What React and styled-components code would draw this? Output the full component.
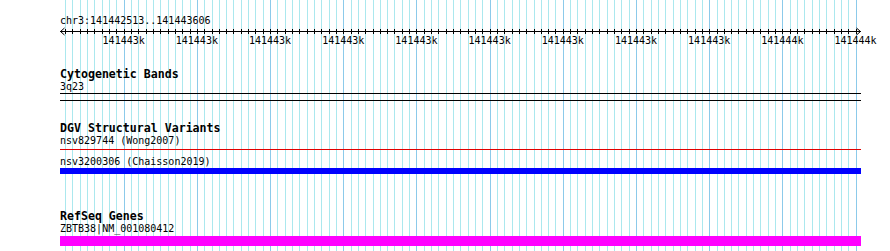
import React from 'react';
import styled, { createGlobalStyle } from 'styled-components';

// genome view: chr3:141442513..141443606 drawn over 801px
const START = 141442513;
const END = 141443606;
const PX_PER_BP = 0.7319;
const TRACK_WIDTH = 801;

const MINOR = 10 * PX_PER_BP;
const MAJOR = 100 * PX_PER_BP;
const toPx = (bp) => (bp - START) * PX_PER_BP;
const firstMinor = toPx(Math.ceil(START / 10) * 10);
const firstMajorBp = Math.ceil(START / 100) * 100;
const firstMajor = toPx(firstMajorBp);

const majors = [];
for (let bp = firstMajorBp; bp <= END; bp += 100) majors.push(bp);

const minors = [];
for (let x = firstMinor; x < TRACK_WIDTH; x += MINOR) minors.push(Math.ceil(x - 0.5) + 0.5);

const GlobalStyle = createGlobalStyle`
  html, body {
    margin: 0;
    background: #ffffff;
  }
  body {
    font-family: 'DejaVu Sans Mono', 'Liberation Mono', monospace;
    color: #000;
  }
`;

const Page = styled.div`
  padding-left: 60px;
  min-height: 100vh;
`;

const View = styled.div`
  width: ${TRACK_WIDTH}px;
  min-height: 100vh;
  padding-top: 15px;
  box-sizing: border-box;
  background-image:
    repeating-linear-gradient(
      to right,
      #8ccaea ${firstMajor}px, #8ccaea ${firstMajor + 1}px,
      transparent ${firstMajor + 1}px, transparent ${firstMajor + MAJOR}px
    ),
    repeating-linear-gradient(
      to right,
      #abe8ee ${firstMinor}px, #abe8ee ${firstMinor + 1}px,
      transparent ${firstMinor + 1}px, transparent ${firstMinor + MINOR}px
    );
`;

const Location = styled.div`
  font-size: 10px;
  line-height: 12px;
`;

const Axis = styled.svg`
  display: block;
  overflow: visible;
`;

const TickLabels = styled.div`
  display: flex;
  padding-left: ${firstMajor - MAJOR / 2}px;
`;

const TickLabel = styled.span`
  flex: 0 0 ${MAJOR}px;
  text-align: center;
  font-size: 10px;
  line-height: 12px;
  white-space: nowrap;
`;

const Track = styled.section`
  margin-top: ${(p) => p.$gap}px;
`;

const TrackTitle = styled.h3`
  margin: 0;
  font-size: 11.6px;
  line-height: 14px;
  font-weight: bold;
`;

const FeatureLabel = styled.div`
  font-size: 10px;
  line-height: 12px;
  white-space: nowrap;
`;

const Feature = styled.div`
  margin-top: ${(p) => p.$gap || 0}px;
`;

const Band = styled.div`
  height: 6px;
  border-top: 1px solid #000;
  border-bottom: 1px solid #000;
`;

const Glyph = styled.div`
  display: flex;
  flex-direction: column;
  height: ${(p) => p.$height}px;
  padding-top: ${(p) => p.$inset || 0}px;
  box-sizing: border-box;
`;

const Bar = styled.div`
  flex: none;
  height: ${(p) => p.$thick}px;
  background: ${(p) => p.$color};
`;

const fmtK = (bp) => `${Math.round(bp / 1000)}k`;

export default function App() {
  return (
    <>
      <GlobalStyle />
      <Page>
        <View>
          <Location>chr3:141442513..141443606</Location>
          <Axis width={TRACK_WIDTH} height="8">
            <line x1="0" x2={TRACK_WIDTH} y1="4.5" y2="4.5" stroke="#000" />
            {minors.map((x) => (
              <line key={x} x1={x} x2={x} y1="2" y2="7" stroke="#000" />
            ))}
            <polyline points="4.5,1 0.5,4.5 4.5,8" fill="none" stroke="#000" />
            <polyline
              points={`${TRACK_WIDTH - 4.5},1 ${TRACK_WIDTH - 0.5},4.5 ${TRACK_WIDTH - 4.5},8`}
              fill="none"
              stroke="#000"
            />
          </Axis>
          <TickLabels>
            {majors.map((bp) => (
              <TickLabel key={bp}>{fmtK(bp)}</TickLabel>
            ))}
          </TickLabels>

          <Track $gap={20}>
            <TrackTitle>Cytogenetic Bands</TrackTitle>
            <FeatureLabel>3q23</FeatureLabel>
            <Band />
          </Track>

          <Track $gap={20}>
            <TrackTitle>DGV Structural Variants</TrackTitle>
            <Feature>
              <FeatureLabel>nsv829744 (Wong2007)</FeatureLabel>
              <Glyph $height={6} $inset={2}>
                <Bar $thick={1} $color="#e00000" />
              </Glyph>
            </Feature>
            <Feature $gap={3}>
              <FeatureLabel>nsv3200306 (Chaisson2019)</FeatureLabel>
              <Glyph $height={6}>
                <Bar $thick={6} $color="#0000ff" />
              </Glyph>
            </Feature>
          </Track>

          <Track $gap={35}>
            <TrackTitle>RefSeq Genes</TrackTitle>
            <Feature>
              <FeatureLabel>ZBTB38|NM_001080412</FeatureLabel>
              <Glyph $height={11} $inset={1}>
                <Bar $thick={10} $color="#ff00ff" />
              </Glyph>
            </Feature>
          </Track>
        </View>
      </Page>
    </>
  );
}
